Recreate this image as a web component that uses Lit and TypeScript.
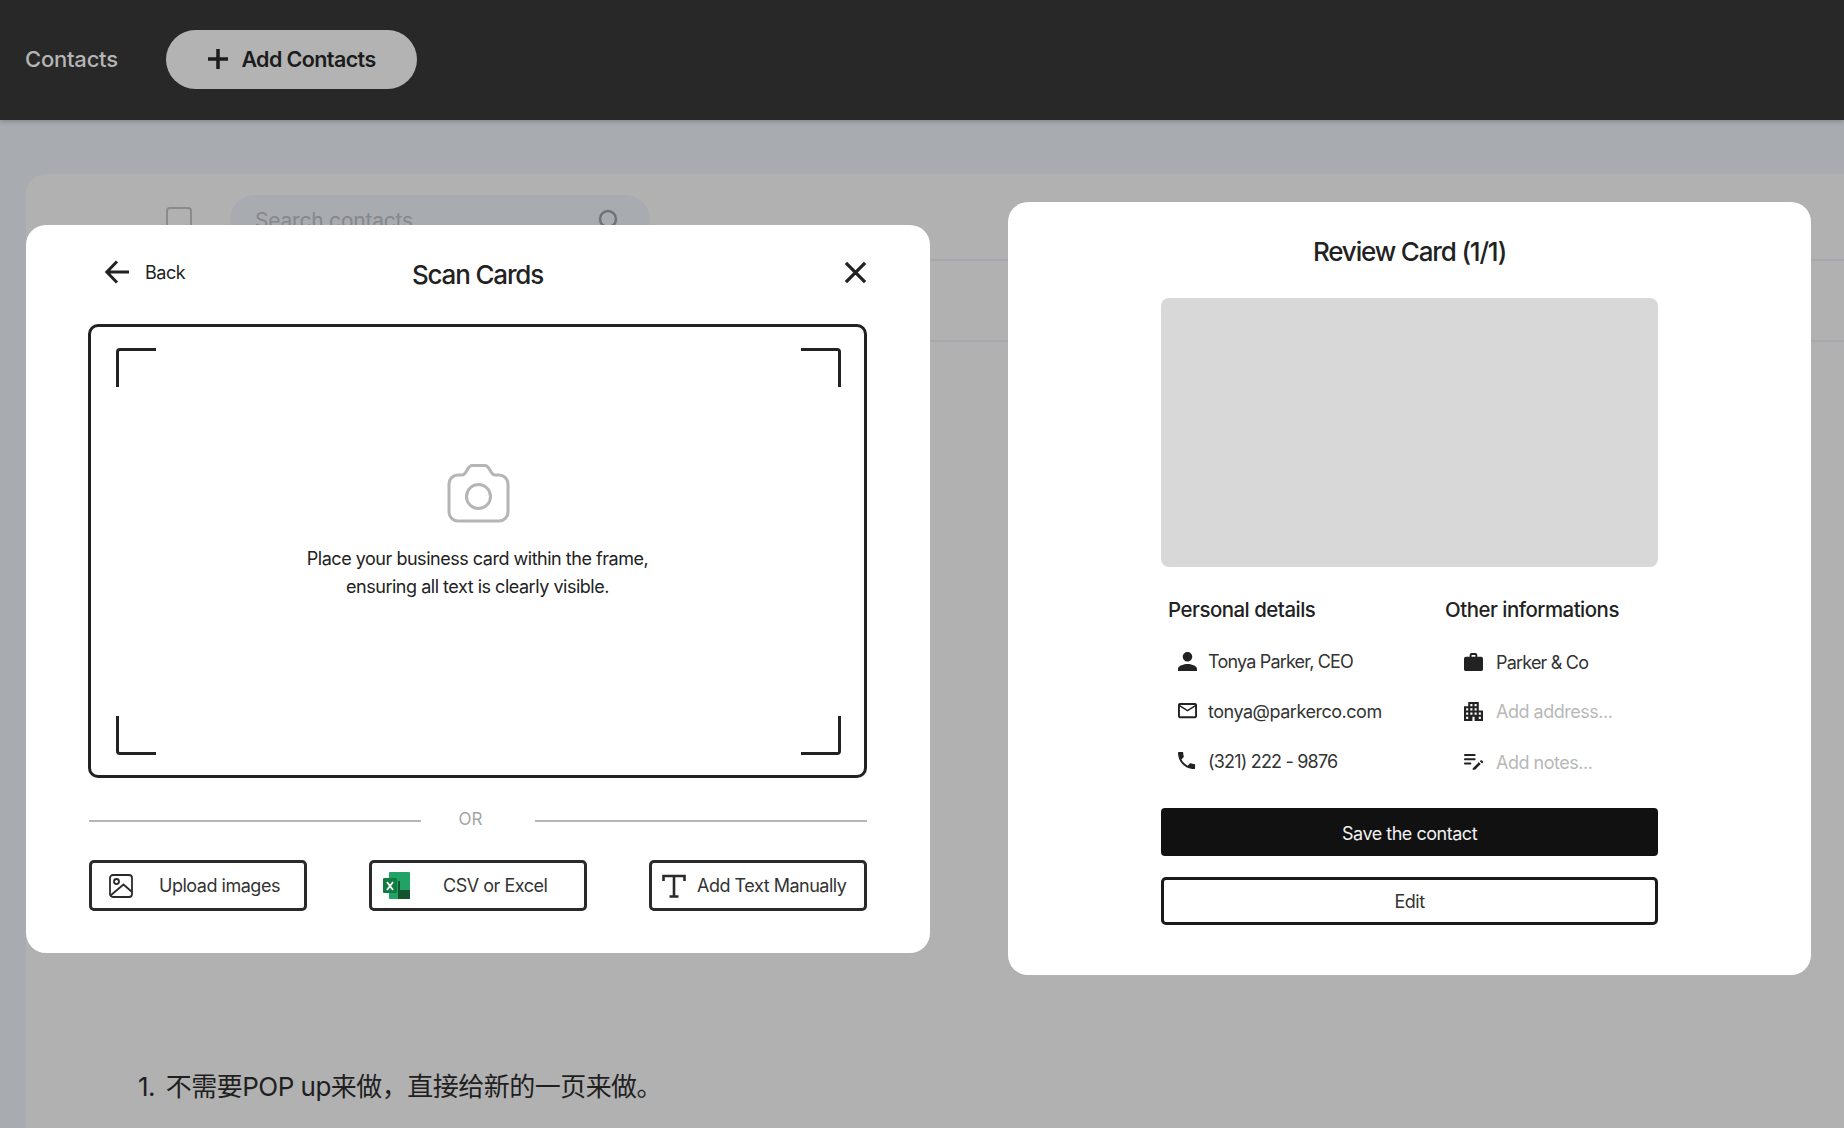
import { LitElement, html, css, svg } from 'lit';
import { customElement } from 'lit/decorators.js';

// material style filled icons, each with a viewBox cropped to its glyph
const ICONS: Record<string, { box: string; d: string }> = {
  person: { box: '4 4 16 16', d: 'M12 12c2.21 0 4-1.79 4-4s-1.79-4-4-4-4 1.79-4 4 1.79 4 4 4zm0 2c-2.67 0-8 1.34-8 4v2h16v-2c0-2.66-5.33-4-8-4z' },
  mail: { box: '2 4 20 16', d: 'M20 4H4c-1.1 0-2 .9-2 2v12c0 1.1.9 2 2 2h16c1.1 0 2-.9 2-2V6c0-1.1-.9-2-2-2zm0 14H4V8l8 5 8-5v10zm-8-7L4 6h16l-8 5z' },
  phone: { box: '3 3 20 18', d: 'M6.62 10.79c1.44 2.83 3.76 5.14 6.59 6.59l2.2-2.2c.27-.27.67-.36 1.02-.24 1.12.37 2.33.57 3.57.57.55 0 1 .45 1 1V20c0 .55-.45 1-1 1-9.39 0-17-7.61-17-17 0-.55.45-1 1-1h3.5c.55 0 1 .45 1 1 0 1.25.2 2.45.57 3.57.11.35.03.74-.25 1.02l-2.2 2.2z' },
  work: { box: '2 2 20 19', d: 'M20 6h-4V4c0-1.11-.89-2-2-2h-4c-1.11 0-2 .89-2 2v2H4c-1.11 0-1.99.89-1.99 2L2 19c0 1.11.89 2 2 2h16c1.11 0 2-.89 2-2V8c0-1.11-.89-2-2-2zm-6 0h-4V4h4v2z' },
  building: { box: '3 3 18 18', d: 'M17 11V3H7v4H3v14h8v-4h2v4h8V11h-4zM7 19H5v-2h2v2zm0-4H5v-2h2v2zm0-4H5V9h2v2zm4 4H9v-2h2v2zm0-4H9V9h2v2zm0-4H9V5h2v2zm4 8h-2v-2h2v2zm0-4h-2V9h2v2zm0-4h-2V5h2v2zm4 12h-2v-2h2v2zm0-4h-2v-2h2v2z' },
  notes: { box: '3 6 18 15', d: 'M14 11c0 .55-.45 1-1 1H4c-.55 0-1-.45-1-1s.45-1 1-1h9c.55 0 1 .45 1 1zM3 7c0 .55.45 1 1 1h9c.55 0 1-.45 1-1s-.45-1-1-1H4c-.55 0-1 .45-1 1zm7 8c0-.55-.45-1-1-1H4c-.55 0-1 .45-1 1s.45 1 1 1h5c.55 0 1-.45 1-1zm8.01-2.13.71-.71c.39-.39 1.02-.39 1.41 0l.71.71c.39.39.39 1.02 0 1.41l-.71.71-2.12-2.12zm-1.41 1.41-5.3 5.3c-.1.09-.16.22-.16.35V20.5c0 .28.22.5.5.5h1.57c.13 0 .26-.05.35-.15l5.3-5.3-2.26-2.25z' },
};

const filled = (name: string) => html`<svg class="icon" viewBox=${ICONS[name].box} fill="#222">${svg`<path d=${ICONS[name].d}></path>`}</svg>`;

@customElement('app-root')
export class AppRoot extends LitElement {
  static styles = css`
    :host {
      display: block;
      position: relative;
      width: 1844px;
      height: 1128px;
      overflow: hidden;
      background: #a8abb0;
      font-family: Inter, 'Noto Sans CJK SC', sans-serif;
      color: #222;
      letter-spacing: -0.03em;
    }
    .topbar {
      height: 120px;
      display: flex;
      align-items: center;
      background: #282828;
      box-shadow: 0 2px 4px rgba(0, 0, 0, 0.18);
      padding: 0 0 2px 25px;
      box-sizing: border-box;
    }
    .topbar-title {
      color: #b5b5b5;
      font-size: 22px;
      font-weight: 500;
      width: 141px;
      letter-spacing: -0.01em;
    }
    .add-btn {
      width: 251px;
      height: 59px;
      border-radius: 30px;
      background: #b3b3b3;
      display: flex;
      align-items: center;
      justify-content: center;
      gap: 12px;
      font-size: 21.5px;
      font-weight: 600;
      letter-spacing: -0.028em;
      color: #1c1c1c;
    }
    .add-btn svg {
      width: 22px;
      height: 22px;
    }
    .panel {
      margin: 54px 0 0 26px;
      height: 954px;
      background: #b1b1b1;
      border-top-left-radius: 20px;
    }
    .toolbar {
      height: 87px;
      box-sizing: border-box;
      border-bottom: 2px solid #a5a8ad;
      display: flex;
      align-items: flex-start;
      padding: 21px 0 0 140px;
    }
    .check {
      width: 26px;
      height: 26px;
      margin: 12px 38px 0 0;
      box-sizing: border-box;
      border: 2px solid #8b8b8b;
      border-radius: 4px;
    }
    .search {
      width: 420px;
      height: 50px;
      box-sizing: border-box;
      border-radius: 25px;
      background: #a8abb0;
      padding: 0 30px 0 25px;
      display: flex;
      align-items: center;
      justify-content: space-between;
      font-size: 21px;
      color: #85888c;
      letter-spacing: -0.01em;
    }
    .search svg {
      width: 22px;
      height: 22px;
    }
    .row-line {
      height: 81px;
      box-sizing: border-box;
      border-bottom: 2px solid #a5a8ad;
    }
    .note {
      margin: 728px 0 0 112px;
      font-size: 26px;
      line-height: 34px;
      color: #1f1f1f;
      letter-spacing: -0.02em;
    }
    .note span {
      margin-right: 4px;
    }

    /* the two dialogs sit over the dimmed page */
    .modal {
      position: absolute;
      background: #fff;
      border-radius: 20px;
      box-sizing: border-box;
    }
    .scan {
      left: 26px;
      top: 225px;
      width: 904px;
      padding: 0 63px 42px 62px;
    }
    .scan-head {
      height: 94px;
      margin-bottom: 5px;
      display: grid;
      grid-template-columns: 1fr auto 1fr;
      align-items: center;
    }
    .back {
      display: flex;
      align-items: center;
      gap: 16px;
      padding-left: 17px;
      font-size: 18px;
    }
    .back svg {
      width: 24px;
      height: 24px;
    }
    .title {
      font-size: 26px;
      font-weight: 500;
      line-height: 28px;
      color: #222;
      letter-spacing: -0.045em;
    }
    .scan-title {
      margin-top: 5px;
    }
    .close {
      justify-self: end;
      width: 23px;
      height: 23px;
    }
    .frame {
      position: relative;
      height: 454px;
      box-sizing: border-box;
      border: 3px solid #222;
      border-radius: 10px;
      display: flex;
      flex-direction: column;
      align-items: center;
      padding-top: 137px;
    }
    .frame-cam {
      width: 63px;
      height: 59px;
      margin-left: 2px;
    }
    .frame-text {
      margin: 22px 0 0;
      text-align: center;
      font-size: 18px;
      line-height: 28px;
      color: #222;
    }
    .corner {
      position: absolute;
      box-sizing: border-box;
      width: 40px;
      height: 39px;
      border: 0 solid #222;
    }
    .tl { left: 25px; top: 21px; border-width: 3px 0 0 3px; border-top-left-radius: 4px; }
    .tr { right: 23px; top: 21px; border-width: 3px 3px 0 0; border-top-right-radius: 4px; }
    .bl { left: 25px; bottom: 20px; border-width: 0 0 3px 3px; border-bottom-left-radius: 4px; }
    .br { right: 23px; bottom: 20px; border-width: 0 3px 3px 0; border-bottom-right-radius: 4px; }
    .divider {
      margin-top: 29px;
      padding-left: 1px;
      height: 24px;
      display: flex;
      align-items: center;
    }
    .divider i {
      flex: 1;
      height: 2px;
      margin-top: 4px;
      background: #b5b5b5;
    }
    .divider span {
      width: 99px;
      padding-right: 15px;
      text-align: center;
      font-size: 17px;
      color: #a5a5a5;
      letter-spacing: 0;
    }
    .actions {
      margin-top: 29px;
      padding-left: 1px;
      display: flex;
      justify-content: space-between;
    }
    .action {
      width: 218px;
      height: 51px;
      box-sizing: border-box;
      border: 3px solid #2a2a2a;
      border-radius: 5px;
      display: flex;
      align-items: center;
      font-size: 18px;
      color: #333;
    }
    .upload { padding-left: 17px; gap: 26px; }
    .upload svg { width: 24px; height: 24px; }
    .excel { padding-left: 11px; gap: 33px; }
    .excel svg { width: 27px; height: 27px; }
    .manual { padding-left: 10px; gap: 11px; }
    .manual svg { width: 24px; height: 24px; }

    .review {
      left: 1008px;
      top: 202px;
      width: 803px;
      padding: 36px 153px 50px;
      display: flex;
      flex-direction: column;
    }
    .review .title {
      text-align: center;
    }
    .preview {
      margin-top: 32px;
      height: 269px;
      border-radius: 8px;
      background: #d8d8d8;
    }
    .details {
      margin-top: 29px;
      padding-left: 7px;
      display: grid;
      grid-template-columns: 277px 1fr;
    }
    .details h3 {
      margin: 0 0 12px;
      font-size: 20.4px;
      font-weight: 500;
      line-height: 28px;
      color: #222;
    }
    .detail {
      height: 50px;
      display: flex;
      align-items: center;
      gap: 11px;
      padding-left: 10px;
      font-size: 18px;
      color: #333;
    }
    .other .detail {
      padding-left: 19px;
      gap: 13px;
    }
    .other .nudge {
      padding-top: 2px;
      box-sizing: border-box;
    }
    .icon {
      width: 19px;
      flex: none;
    }
    .tight {
      letter-spacing: -0.045em;
    }
    .muted {
      color: #b8b8b8;
    }
    .save {
      margin-top: 22px;
      height: 48px;
      padding-top: 2px;
      box-sizing: border-box;
      border-radius: 4px;
      background: #111;
      color: #f2f2f2;
      font-size: 18px;
      display: flex;
      align-items: center;
      justify-content: center;
    }
    .edit {
      margin-top: 21px;
      height: 48px;
      box-sizing: border-box;
      border: 3px solid #1a1a1a;
      border-radius: 5px;
      color: #333;
      font-size: 18px;
      display: flex;
      align-items: center;
      justify-content: center;
    }
  `;

  render() {
    return html`
      <div class="topbar">
        <div class="topbar-title">Contacts</div>
        <div class="add-btn">
          <svg viewBox="0 0 22 22" fill="none" stroke="#1c1c1c" stroke-width="3.500"><path d="M11 1v20M1 11h20"></path></svg>
          Add Contacts
        </div>
      </div>

      <div class="panel">
        <div class="toolbar">
          <div class="check"></div>
          <div class="search">
            Search contacts
            <svg viewBox="0 0 22 22" fill="none" stroke="#6f7276" stroke-width="2.500"><circle cx="10" cy="10" r="8"></circle><path d="M16 16l5 5"></path></svg>
          </div>
        </div>
        <div class="row-line"></div>
        <p class="note"><span>1.</span> 不需要POP up来做，直接给新的一页来做。</p>
      </div>

      <section class="modal scan">
        <div class="scan-head">
          <div class="back">
            <svg viewBox="0 0 24 24" fill="none" stroke="#222" stroke-width="3"><path d="M24 12H2M12 1.500L1.800 12 12 22.500"></path></svg>
            Back
          </div>
          <div class="title scan-title">Scan Cards</div>
          <svg class="close" viewBox="0 0 24 24" fill="none" stroke="#222" stroke-width="3.400"><path d="M2 2l20 20M22 2L2 22"></path></svg>
        </div>
        <div class="frame">
          <span class="corner tl"></span><span class="corner tr"></span>
          <span class="corner bl"></span><span class="corner br"></span>
          <svg class="frame-cam" viewBox="0 0 63 59" fill="none" stroke="#b5b5b5" stroke-width="3">
            <path d="M11 11h4c5 0 5-9.500 10-9.500h13c5 0 5 9.500 10 9.500h4a9 9 0 0 1 9 9v28a9 9 0 0 1-9 9H11a9 9 0 0 1-9-9V20a9 9 0 0 1 9-9z"></path>
            <circle cx="31.500" cy="32.500" r="12"></circle>
          </svg>
          <p class="frame-text">Place your business card within the frame,<br />ensuring all text is clearly visible.</p>
        </div>
        <div class="divider"><i></i><span>OR</span><i></i></div>
        <div class="actions">
          <div class="action upload">
            <svg viewBox="0 0 24 24" fill="none" stroke="#2a2a2a" stroke-width="1.800">
              <rect x="1" y="1" width="22" height="22" rx="3"></rect>
              <circle cx="7.500" cy="7.500" r="2.500"></circle>
              <path d="M1.500 21.500L14.500 10.500L23 18"></path>
            </svg>
            Upload images
          </div>
          <div class="action excel">
            <svg viewBox="0 0 27 27">
              <rect x="6" y="0" width="21" height="27" rx="1" fill="#21a366"></rect>
              <rect x="15" y="18" width="12" height="9" fill="#14532d"></rect>
              <rect x="15" y="9" width="2" height="9" fill="#14532d"></rect>
              <rect x="0" y="6" width="14" height="15" rx="1" fill="#107c41"></rect>
              <path d="M4 10l6 8M10 10l-6 8" stroke="#fff" stroke-width="1.800" fill="none"></path>
            </svg>
            <span class="csv">CSV or Excel</span>
          </div>
          <div class="action manual">
            <svg viewBox="0 0 24 24" fill="none" stroke="#2a2a2a" stroke-width="2.600">
              <path d="M1.500 7V2h21v5M12 2v20.500M7.500 22.500h9"></path>
            </svg>
            Add Text Manually
          </div>
        </div>
      </section>

      <section class="modal review">
        <div class="title">Review Card (1/1)</div>
        <div class="preview"></div>
        <div class="details">
          <div>
            <h3>Personal details</h3>
            <div class="detail">${filled('person')}<span class="tight">Tonya Parker, CEO</span></div>
            <div class="detail">${filled('mail')}tonya@parkerco.com</div>
            <div class="detail">${filled('phone')}<span class="tight">(321) 222 - 9876</span></div>
          </div>
          <div class="other">
            <h3>Other informations</h3>
            <div class="detail nudge">${filled('work')}<span class="tight">Parker &amp; Co</span></div>
            <div class="detail">${filled('building')}<span class="muted">Add address...</span></div>
            <div class="detail nudge">${filled('notes')}<span class="muted">Add notes...</span></div>
          </div>
        </div>
        <div class="save">Save the contact</div>
        <div class="edit">Edit</div>
      </section>
    `;
  }
}
